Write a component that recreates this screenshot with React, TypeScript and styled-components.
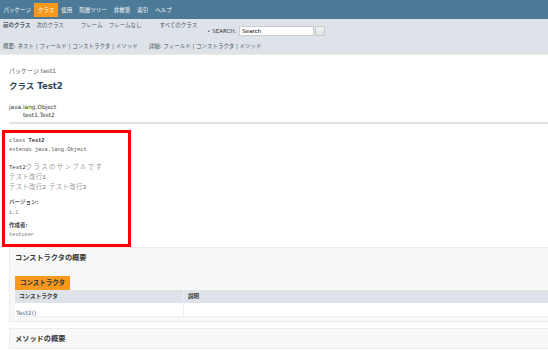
import React from "react";
import styled, { createGlobalStyle } from "styled-components";

const sans = `"DejaVu Sans", "Noto Sans CJK JP", sans-serif`;
const mono = `"Liberation Mono", "Noto Sans CJK JP", monospace`;

const Global = createGlobalStyle`
  html, body { margin: 0; padding: 0; background: #fff; }
  body { width: 548px; height: 350px; overflow: hidden; font-family: ${sans}; color: #353833; }
`;

const Page = styled.div`
  width: 548px;
  height: 350px;
  overflow: hidden;
`;

/* ---------- top navigation ---------- */
const TopNav = styled.nav`
  height: 19px;
  background: #4d7a97;
  display: flex;
  align-items: center;
`;

const TopItem = styled.span<{ $active?: boolean }>`
  font-size: 5.5px;
  line-height: 14px;
  height: 14px;
  padding: 0 3.5px;
  color: #fff;
  white-space: nowrap;
  background: ${(p) => (p.$active ? "#f8981d" : "transparent")};
`;

/* ---------- sub navigation ---------- */
const SubNav = styled.div`
  background: #dee3e9;
  height: 35px;
  border-bottom: 1px solid #ececec;
  display: flex;
  flex-direction: column;
`;

const SubRow = styled.div<{ $h: number }>`
  display: flex;
  align-items: flex-start;
  height: ${(p) => p.$h}px;
  padding-left: 3px;
  box-sizing: border-box;
  padding-top: ${(p) => (p.$h > 15 ? 2 : 0)}px;
`;

const NavGroup = styled.div<{ $ml?: number }>`
  display: flex;
  gap: 6px;
  margin-left: ${(p) => p.$ml ?? 0}px;
`;

const SubItem = styled.span<{ $bold?: boolean }>`
  font-size: 5.5px;
  line-height: 8px;
  color: #4a5a66;
  font-weight: ${(p) => (p.$bold ? 700 : 400)};
  white-space: nowrap;
`;

const Search = styled.div`
  display: flex;
  align-items: center;
  margin-left: 10px;
  margin-top: 5px;
  height: 10px;
`;

const Bullet = styled.span`
  font-size: 5px;
  color: #353833;
  margin-right: 2px;
`;

const SearchLabel = styled.span`
  font-size: 5.5px;
  color: #353833;
  margin-right: 3px;
`;

const SearchInput = styled.div`
  width: 75px;
  height: 10px;
  box-sizing: border-box;
  background: #fff;
  border: 1px solid #c9ccd0;
  font-size: 5.5px;
  line-height: 8px;
  padding-left: 2px;
  color: #000;
`;

const SearchButton = styled.div`
  width: 10px;
  height: 10px;
  box-sizing: border-box;
  margin-left: 1px;
  border: 1px solid #c6c9cc;
  border-radius: 1px;
  background: linear-gradient(#f4f4f4, #e2e2e2);
`;

const Crumbs = styled.div<{ $ml?: number }>`
  font-size: 5.5px;
  line-height: 8px;
  color: #4a5a66;
  white-space: nowrap;
  margin-left: ${(p) => p.$ml ?? 0}px;
`;

/* ---------- header ---------- */
const Header = styled.div`
  padding-left: 9px;
  padding-top: 12px;
`;

const PackageLabel = styled.div`
  font-size: 6px;
  line-height: 8px;
  color: #5a5a5a;
`;

const Title = styled.h1`
  margin: 5.5px 0 0;
  font-size: 8.5px;
  line-height: 11px;
  font-weight: 700;
  color: #2c4557;
`;

const Inheritance = styled.div`
  padding-left: 9px;
  margin-top: 11.5px;
`;

const InheritLine = styled.div<{ $indent?: number }>`
  font-size: 5.8px;
  line-height: 8px;
  color: #353833;
  padding-left: ${(p) => p.$indent ?? 0}px;
`;

const Rule = styled.div`
  margin: 3px 0 0 9px;
  height: 2px;
  background: #e2e2e2;
`;

/* ---------- highlighted description ---------- */
const Highlight = styled.div`
  margin: 6px 0 0 2px;
  width: 129px;
  box-sizing: border-box;
  border: 3px solid #ff0000;
  padding: 3.5px 0 5px 4px;
`;

const Code = styled.div`
  font-family: ${mono};
  font-size: 5.4px;
  line-height: 9px;
  color: #555;
  white-space: pre;
`;

const Strong = styled.span`
  font-weight: 700;
  color: #333;
`;

const Desc = styled.div`
  margin-top: 7px;
  font-family: ${mono};
  font-size: 5.6px;
  line-height: 9px;
  color: #666;
`;

const DescLead = styled.span`
  color: #333;
`;

const Jp = styled.span<{ $wide?: boolean }>`
  font-family: "Noto Sans CJK JP", sans-serif;
  font-size: 6.4px;
  color: #9a9a9a;
  letter-spacing: ${(p) => (p.$wide ? 1.4 : 0.3)}px;
`;

const TagLabel = styled.div<{ $mt: number }>`
  margin-top: ${(p) => p.$mt}px;
  font-size: 5.5px;
  line-height: 8px;
  font-weight: 700;
  color: #4e4e4e;
`;

const TagValue = styled.div<{ $mt: number }>`
  margin-top: ${(p) => p.$mt}px;
  font-family: ${mono};
  font-size: 5.2px;
  line-height: 8px;
  color: #777;
`;

/* ---------- summary blocks ---------- */
const Block = styled.section<{ $mt?: number }>`
  margin: ${(p) => p.$mt ?? 0}px -4px 0 9px;
  background: #f8f8f8;
  border: 1px solid #ededed;
  padding: 5px 0 4px 5px;
`;

const BlockTitle = styled.h3`
  margin: 0;
  font-size: 7.2px;
  line-height: 10px;
  font-weight: 700;
  color: #353833;
`;

const Tab = styled.div`
  margin-top: 13px;
  display: inline-block;
  height: 14px;
  line-height: 14px;
  padding: 0 5px;
  background: #f8981d;
  color: #253441;
  font-size: 6.5px;
  font-weight: 700;
`;

const Table = styled.div`
  display: grid;
  grid-template-columns: 168px 1fr;
`;

const HeadCell = styled.div<{ $sep?: boolean }>`
  height: 13px;
  line-height: 13px;
  background: #dee3e9;
  font-size: 5.6px;
  font-weight: 700;
  color: #353833;
  padding-left: 4px;
  border-left: ${(p) => (p.$sep ? "1px solid #e9edf1" : "none")};
`;

const Cell = styled.div<{ $sep?: boolean }>`
  height: 13px;
  line-height: 13px;
  background: #fff;
  padding-left: 1px;
  border-left: ${(p) => (p.$sep ? "1px solid #eeeeee" : "none")};
  border-bottom: 1px solid #f0f0f0;
`;

const Link = styled.span`
  color: #4a6782;
  font-size: 6px;
`;

export default function App() {
  return (
    <Page>
      <Global />
      <TopNav>
        <TopItem>パッケージ</TopItem>
        <TopItem $active>クラス</TopItem>
        <TopItem>使用</TopItem>
        <TopItem>階層ツリー</TopItem>
        <TopItem>非推奨</TopItem>
        <TopItem>索引</TopItem>
        <TopItem>ヘルプ</TopItem>
      </TopNav>

      <SubNav>
        <SubRow $h={23}>
          <NavGroup>
            <SubItem $bold>前のクラス</SubItem>
            <SubItem>次のクラス</SubItem>
          </NavGroup>
          <NavGroup $ml={17}>
            <SubItem>フレーム</SubItem>
            <SubItem>フレームなし</SubItem>
          </NavGroup>
          <NavGroup $ml={18}>
            <SubItem>すべてのクラス</SubItem>
          </NavGroup>
          <Search>
            <Bullet>•</Bullet>
            <SearchLabel>SEARCH:</SearchLabel>
            <SearchInput>Search</SearchInput>
            <SearchButton />
          </Search>
        </SubRow>
        <SubRow $h={12}>
          <Crumbs>概要:&nbsp;ネスト&nbsp;|&nbsp;フィールド&nbsp;|&nbsp;コンストラクタ&nbsp;|&nbsp;メソッド</Crumbs>
          <Crumbs $ml={11}>詳細:&nbsp;フィールド&nbsp;|&nbsp;コンストラクタ&nbsp;|&nbsp;メソッド</Crumbs>
        </SubRow>
      </SubNav>

      <Header>
        <PackageLabel>パッケージ test1</PackageLabel>
        <Title>クラス Test2</Title>
      </Header>

      <Inheritance>
        <InheritLine>java.lang.Object</InheritLine>
        <InheritLine $indent={14}>test1.Test2</InheritLine>
      </Inheritance>
      <Rule />

      <Highlight>
        <Code>
          class <Strong>Test2</Strong>
          {"\n"}extends java.lang.Object
        </Code>
        <Desc>
          <div>
            <DescLead>Test2</DescLead>
            <Jp $wide>クラスのサンプルです</Jp>
          </div>
          <div>
            <Jp>テスト改行</Jp>1
          </div>
          <div>
            <Jp>テスト改行</Jp>2 <Jp>テスト改行</Jp>3
          </div>
        </Desc>
        <TagLabel $mt={6.5}>バージョン:</TagLabel>
        <TagValue $mt={3}>1.1</TagValue>
        <TagLabel $mt={3.5}>作成者:</TagLabel>
        <TagValue $mt={2.5}>testuser</TagValue>
      </Highlight>

      <Block>
        <BlockTitle>コンストラクタの概要</BlockTitle>
        <Tab>コンストラクタ</Tab>
        <Table>
          <HeadCell>コンストラクタ</HeadCell>
          <HeadCell $sep>説明</HeadCell>
          <Cell>
            <Link>Test2()</Link>
          </Cell>
          <Cell $sep />
        </Table>
      </Block>

      <Block $mt={6}>
        <BlockTitle>メソッドの概要</BlockTitle>
      </Block>
    </Page>
  );
}
